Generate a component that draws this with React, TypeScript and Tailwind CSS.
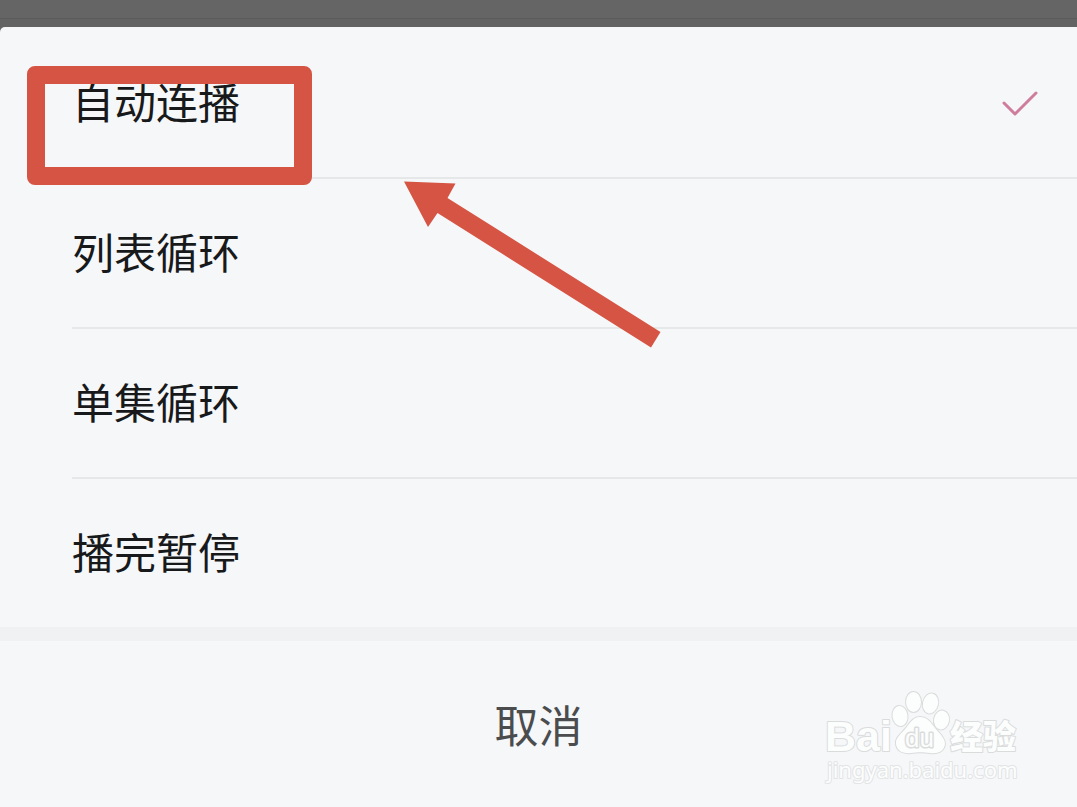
import React, { useState } from 'react';

const options = ['自动连播', '列表循环', '单集循环', '播完暂停'];

function CheckMark() {
    return (
        <svg width="36" height="26" viewBox="0 0 36 26" fill="none" aria-hidden="true">
            <path d="M2 13L13 24L34 3" stroke="#cf7d9c" strokeWidth="3" strokeLinecap="round" strokeLinejoin="round" />
        </svg>
    );
}

function Highlight() {
    return (
        <div className="pointer-events-none absolute left-[27px] top-[39px] h-[119px] w-[285px] rounded-lg border-[18px] border-[#d65443]"></div>
    );
}

function Arrow() {
    return (
        <svg
            className="pointer-events-none absolute left-[404px] top-[154px]"
            width="257"
            height="167"
            viewBox="0 0 257 167"
            aria-hidden="true"
        >
            <path d="M0 0.5L51.5 2.5L43.5 17L256.5 151L247 166.5L33.5 32L24 46Z" fill="#d65443" />
        </svg>
    );
}

function Watermark() {
    return (
        <svg
            className="pointer-events-none absolute bottom-[17px] right-[52px]"
            width="205"
            height="105"
            viewBox="0 0 205 105"
            fill="#fcfdfd"
            stroke="#dadcdc"
            strokeWidth="2"
            strokeLinejoin="round"
            paintOrder="stroke"
        >
            <text x="5" y="66" fontSize="43" fontWeight="bold" fontFamily="'Liberation Sans', sans-serif">
                Bai
            </text>
            <g strokeWidth="2">
                <ellipse cx="80" cy="31" rx="7.5" ry="10" transform="rotate(-8 80 31)" />
                <ellipse cx="93.5" cy="17" rx="7.5" ry="10" />
                <ellipse cx="110.5" cy="18.5" rx="7.5" ry="10" transform="rotate(14 110.5 18.5)" />
                <ellipse cx="121.5" cy="35" rx="7.5" ry="9.5" transform="rotate(10 121.5 35)" />
                <path d="M100 32C108 32 111 38 115 43C120 49 125 53 125 59C124 67 117 69 110 68C103 67 98 67 91 68C83 69 77 66 76 59C75 53 81 49 86 43C90 38 93 32 100 32Z" />
            </g>
            <text x="85" y="62" fontSize="26" fontFamily="'Liberation Sans', sans-serif" strokeWidth="3">
                du
            </text>
            <text x="130" y="64" fontSize="33" fontWeight="900" fontFamily="'Noto Sans CJK SC', sans-serif">
                经验
            </text>
            <text x="7" y="93" fontSize="22" fontFamily="'Noto Sans', sans-serif" stroke="#e2e4e5">
                jingyan.baidu.com
            </text>
        </svg>
    );
}

export default function App() {
    const [selected, setSelected] = useState(0);

    return (
        <div className="flex min-h-screen flex-col bg-[#656565] font-['Noto_Sans_CJK_SC',sans-serif]">
            <div className="h-[19px] border-b border-[#5b5b5b]"></div>
            <div className="h-2 bg-[#636363]"></div>
            <main className="relative flex grow flex-col rounded-tl-[5px] bg-[#f5f7f9]">
                <ul className="pl-[72px] pt-[2px]">
                    {options.map((option, index) => (
                        <li key={option} className="border-b-2 border-[#e5e7e9] last:border-b-0">
                            <button
                                type="button"
                                aria-pressed={selected === index}
                                onClick={() => setSelected(index)}
                                className="flex h-[148px] w-full items-center justify-between pr-[39px] text-left text-[42px] leading-[60px] text-[#18191b]"
                            >
                                <span className="pb-1">{option}</span>
                                {selected === index && <CheckMark />}
                            </button>
                        </li>
                    ))}
                </ul>
                <div className="h-[14px] bg-[#f0f1f3]"></div>
                <button type="button" className="grow text-[44px] leading-[64px] text-[#4b4c4e]">
                    取消
                </button>
                <Highlight />
                <Arrow />
                <Watermark />
            </main>
        </div>
    );
}
